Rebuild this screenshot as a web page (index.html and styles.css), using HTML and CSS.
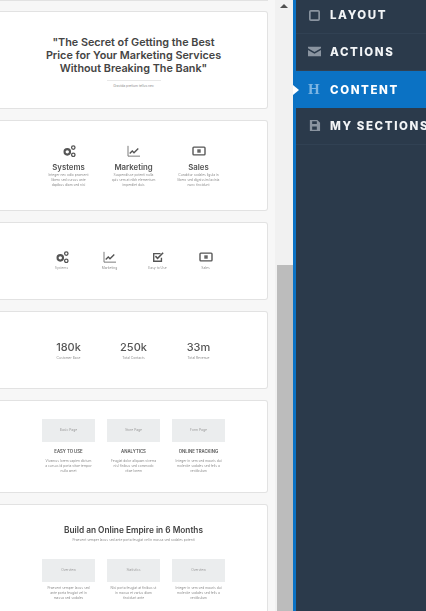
FILE: index.html
```html
<!DOCTYPE html>
<html lang="en">
<head>
    <meta charset="UTF-8">
    <meta name="viewport" content="width=device-width, initial-scale=1.0">
    <title>Page builder</title>
    <link rel="stylesheet" href="styles.css">
</head>
<body>
    <div class="builder">
        <!-- Section previews -->
        <main class="canvas">
            <div class="sections">
                <section class="card card-top"></section>

                <section class="card card-hero">
                    <h1>"The Secret of Getting the Best<br>Price for Your Marketing Services<br>Without Breaking The Bank"</h1>
                    <div class="rule"></div>
                    <p class="tiny">Gravida pretium tellus nec</p>
                </section>

                <section class="card card-features">
                    <div class="cols-3">
                        <div class="feature">
                            <svg class="icon" viewBox="0 0 16 14"><circle cx="6" cy="8" r="3.2" fill="none" stroke="#555" stroke-width="2.4"/><circle cx="13" cy="3" r="2" fill="none" stroke="#555" stroke-width="1.5"/><circle cx="13" cy="11.5" r="2" fill="none" stroke="#555" stroke-width="1.5"/></svg>
                            <h3>Systems</h3>
                            <p class="tiny">Integer nec odio praesent libero sed cursus ante dapibus diam sed nisi</p>
                        </div>
                        <div class="feature">
                            <svg class="icon" viewBox="0 0 16 14"><path d="M1 1v12h14" fill="none" stroke="#666" stroke-width="1"/><path d="M3 10l3-3 2 2 5-5" fill="none" stroke="#555" stroke-width="1.6"/></svg>
                            <h3>Marketing</h3>
                            <p class="tiny">Suspendisse potenti nulla quis sem at nibh elementum imperdiet duis</p>
                        </div>
                        <div class="feature">
                            <svg class="icon" viewBox="0 0 16 14"><rect x="1" y="2.5" width="14" height="9" rx="1" fill="none" stroke="#555" stroke-width="1.6"/><rect x="6" y="5" width="4" height="4" fill="#666"/></svg>
                            <h3>Sales</h3>
                            <p class="tiny">Curabitur sodales ligula in libero sed dignissim lacinia nunc tincidunt</p>
                        </div>
                    </div>
                </section>

                <section class="card card-icons">
                    <div class="cols-4">
                        <div class="icon-item">
                            <svg class="icon" viewBox="0 0 16 14"><circle cx="6" cy="8" r="3.2" fill="none" stroke="#555" stroke-width="2.4"/><circle cx="13" cy="3" r="2" fill="none" stroke="#555" stroke-width="1.5"/><circle cx="13" cy="11.5" r="2" fill="none" stroke="#555" stroke-width="1.5"/></svg>
                            <span class="tiny">Systems</span>
                        </div>
                        <div class="icon-item">
                            <svg class="icon" viewBox="0 0 16 14"><path d="M1 1v12h14" fill="none" stroke="#666" stroke-width="1"/><path d="M3 10l3-3 2 2 5-5" fill="none" stroke="#555" stroke-width="1.6"/></svg>
                            <span class="tiny">Marketing</span>
                        </div>
                        <div class="icon-item">
                            <svg class="icon" viewBox="0 0 16 14"><path d="M12 8v4H3V3h8" fill="none" stroke="#555" stroke-width="1.6"/><path d="M5 6l2.5 2.5L14 2" fill="none" stroke="#555" stroke-width="1.8"/></svg>
                            <span class="tiny">Easy to Use</span>
                        </div>
                        <div class="icon-item">
                            <svg class="icon" viewBox="0 0 16 14"><rect x="1" y="2.5" width="14" height="9" rx="1" fill="none" stroke="#555" stroke-width="1.6"/><rect x="6" y="5" width="4" height="4" fill="#666"/></svg>
                            <span class="tiny">Sales</span>
                        </div>
                    </div>
                </section>

                <section class="card card-stats">
                    <div class="cols-3">
                        <div class="stat"><strong>180k</strong><span class="tiny">Customer Base</span></div>
                        <div class="stat"><strong>250k</strong><span class="tiny">Total Contacts</span></div>
                        <div class="stat"><strong>33m</strong><span class="tiny">Total Revenue</span></div>
                    </div>
                </section>

                <section class="card card-tiles">
                    <div class="cols-3">
                        <div class="tile">
                            <div class="thumb">Basic Page</div>
                            <h4>EASY TO USE</h4>
                            <p class="tiny">Vivamus lorem sapien dictum a cursus id porta vitae tempor nulla amet</p>
                        </div>
                        <div class="tile">
                            <div class="thumb">Store Page</div>
                            <h4>ANALYTICS</h4>
                            <p class="tiny">Feugiat dolor aliquam viverra nisl finibus sed commodo vitae lorem</p>
                        </div>
                        <div class="tile">
                            <div class="thumb">Form Page</div>
                            <h4>ONLINE TRACKING</h4>
                            <p class="tiny">Integer in sem sed mauris dui molestie sodales sed felis a vestibulum</p>
                        </div>
                    </div>
                </section>

                <section class="card card-empire">
                    <h2>Build an Online Empire in 6 Months</h2>
                    <p class="tiny intro">Praesent semper lacus sed ante porta feugiat vel in massa sed sodales potenti</p>
                    <div class="cols-3">
                        <div class="tile">
                            <div class="thumb">Overview</div>
                            <p class="tiny">Praesent semper lacus sed ante porta feugiat vel in massa sed sodales</p>
                        </div>
                        <div class="tile">
                            <div class="thumb">Statistics</div>
                            <p class="tiny">Nisi porta feugiat at finibus ut in massa et varius diam tincidunt ante</p>
                        </div>
                        <div class="tile">
                            <div class="thumb">Overview</div>
                            <p class="tiny">Integer in sem sed mauris dui molestie sodales sed felis a vestibulum</p>
                        </div>
                    </div>
                </section>
            </div>
        </main>

        <!-- Scrollbar -->
        <div class="scrollbar">
            <div class="scroll-up"></div>
            <div class="scroll-thumb"></div>
        </div>

        <!-- Sidebar -->
        <nav class="sidebar">
            <a class="side-item" href="#">
                <svg class="side-icon" viewBox="0 0 14 14"><rect x="2" y="2" width="10" height="10" rx="1" fill="none" stroke="#8a94a0" stroke-width="1.8"/></svg>
                LAYOUT
            </a>
            <a class="side-item" href="#">
                <svg class="side-icon" viewBox="0 0 14 14"><path d="M0 2h14v1.600L7 7.600 0 3.600zM0 5.400l7 4 7-4V12H0z" fill="#8a94a0"/></svg>
                ACTIONS
            </a>
            <a class="side-item active" href="#">
                <span class="side-h">H</span>
                CONTENT
            </a>
            <a class="side-item" href="#">
                <svg class="side-icon" viewBox="0 0 14 14"><path d="M2 1h8l3 3v9H2zM4.500 2.500v3h5v-3zM4.500 8v3.500h5V8z" fill="#8a94a0" fill-rule="evenodd"/></svg>
                MY SECTIONS
            </a>
        </nav>
    </div>
</body>
</html>
```

FILE: styles.css
```css
* {
    margin: 0;
    padding: 0;
    box-sizing: border-box;
}

body {
    font-family: 'Inter', 'Liberation Sans', sans-serif;
    color: #4a4a4a;
    background: #2b3a4b;
    overflow: hidden;
}

.builder {
    display: flex;
    width: 426px;
    height: 611px;
    overflow: hidden;
}

/* Section previews */
.canvas {
    width: 275px;
    height: 611px;
    flex-shrink: 0;
    overflow: hidden;
    background: #f7f7f7;
}

/* the blur runs past the left edge so it doesn't fade there */
.sections {
    display: flex;
    flex-direction: column;
    gap: 11px;
    margin-left: -4px;
    filter: blur(0.7px);
}

.card {
    flex-shrink: 0;
    width: 272px;
    padding-left: 4px;
    background: #fff;
    border: 1px solid #e2e2e2;
    border-left: 0;
    border-radius: 0 3px 3px 0;
    text-align: center;
}

.card-top {
    height: 1px;
    margin-top: -1px;
    margin-bottom: -1px;
    background: #e2e2e2;
}

.card-hero {
    height: 98px;
    padding-top: 24px;
}

.card-hero h1 {
    font-size: 10.8px;
    line-height: 13px;
    font-weight: 600;
    color: #444;
    white-space: nowrap;
}

.rule {
    width: 54px;
    height: 1px;
    margin: 5px auto 3px;
    background: #e8e8e8;
}

.tiny {
    display: block;
    font-size: 3.3px;
    line-height: 5px;
    color: #8c8c8c;
}

.cols-3 {
    display: grid;
    grid-template-columns: repeat(3, 53px);
    gap: 12px;
    justify-content: center;
}

.cols-4 {
    display: grid;
    grid-template-columns: repeat(4, 36px);
    gap: 12px;
    justify-content: center;
}

.icon {
    display: block;
    width: 14px;
    height: 12px;
    margin: 0 auto;
}

.card-features {
    height: 91px;
    padding-top: 24px;
}

.feature h3 {
    margin: 5px 0 1px;
    font-size: 7.8px;
    line-height: 10px;
    font-weight: 600;
    color: #555;
}

.feature .tiny {
    padding: 0 4px;
}

.card-icons {
    height: 78px;
    padding-top: 28px;
}

.icon-item .tiny {
    margin-top: 3px;
}

.card-stats {
    height: 78px;
    padding-top: 28px;
}

.stat strong {
    display: block;
    font-size: 11px;
    line-height: 14px;
    font-weight: 500;
    color: #555;
}

.stat .tiny {
    margin-top: 2px;
}

.card-tiles {
    height: 93px;
    padding-top: 18px;
}

.thumb {
    height: 23px;
    background: #ebedee;
    font-size: 3.3px;
    line-height: 23px;
    color: #999;
}

.tile h4 {
    margin: 6px 0 4px;
    font-size: 4.3px;
    line-height: 7px;
    font-weight: 600;
    color: #555;
    white-space: nowrap;
}

.tile .tiny {
    padding: 0 3px;
}

.card-empire {
    height: 120px;
    padding-top: 20px;
}

.card-empire h2 {
    font-size: 8.3px;
    line-height: 11px;
    font-weight: 600;
    color: #444;
}

.intro {
    margin: 2px 0 16px;
}

.card-empire .tile .tiny {
    margin-top: 4px;
}

/* Scrollbar */
.scrollbar {
    width: 18px;
    flex-shrink: 0;
    background: #f1f1f1;
    display: flex;
    flex-direction: column;
    justify-content: space-between;
}

.scroll-up {
    width: 0;
    height: 0;
    margin: 4px auto 0 5px;
    border-left: 4px solid transparent;
    border-right: 4px solid transparent;
    border-bottom: 4px solid #505050;
}

.scroll-thumb {
    height: 346px;
    margin-left: 2px;
    background: #bcbcbc;
}

/* Sidebar */
.sidebar {
    flex: 1;
    min-width: 0;
    background: #2b3a4b;
    border-left: 3px solid #0b72c4;
}

.side-item {
    display: flex;
    align-items: center;
    gap: 9px;
    height: 37px;
    margin-right: -4px;
    padding: 0 0 1px 12px;
    white-space: nowrap;
    text-decoration: none;
    font-size: 11.5px;
    font-weight: 800;
    letter-spacing: 1.6px;
    color: #f2f4f6;
    border-bottom: 1px solid #314153;
    filter: blur(0.5px);
}

.side-item:first-child {
    height: 34px;
    padding-bottom: 3px;
}

.side-icon {
    width: 13px;
    height: 13px;
    flex-shrink: 0;
}

.side-h {
    width: 13px;
    font-family: 'Liberation Serif', serif;
    font-size: 15px;
    font-weight: 700;
    letter-spacing: 0;
    color: #7db5e3;
}

.side-item.active {
    position: relative;
    padding-bottom: 0;
    background: #0b72c4;
    color: #fff;
    border-bottom: 0;
}

.side-item.active::before {
    content: '';
    position: absolute;
    left: -3px;
    top: 50%;
    margin-top: -5px;
    border-top: 5px solid transparent;
    border-bottom: 5px solid transparent;
    border-left: 6px solid #fff;
}
```
